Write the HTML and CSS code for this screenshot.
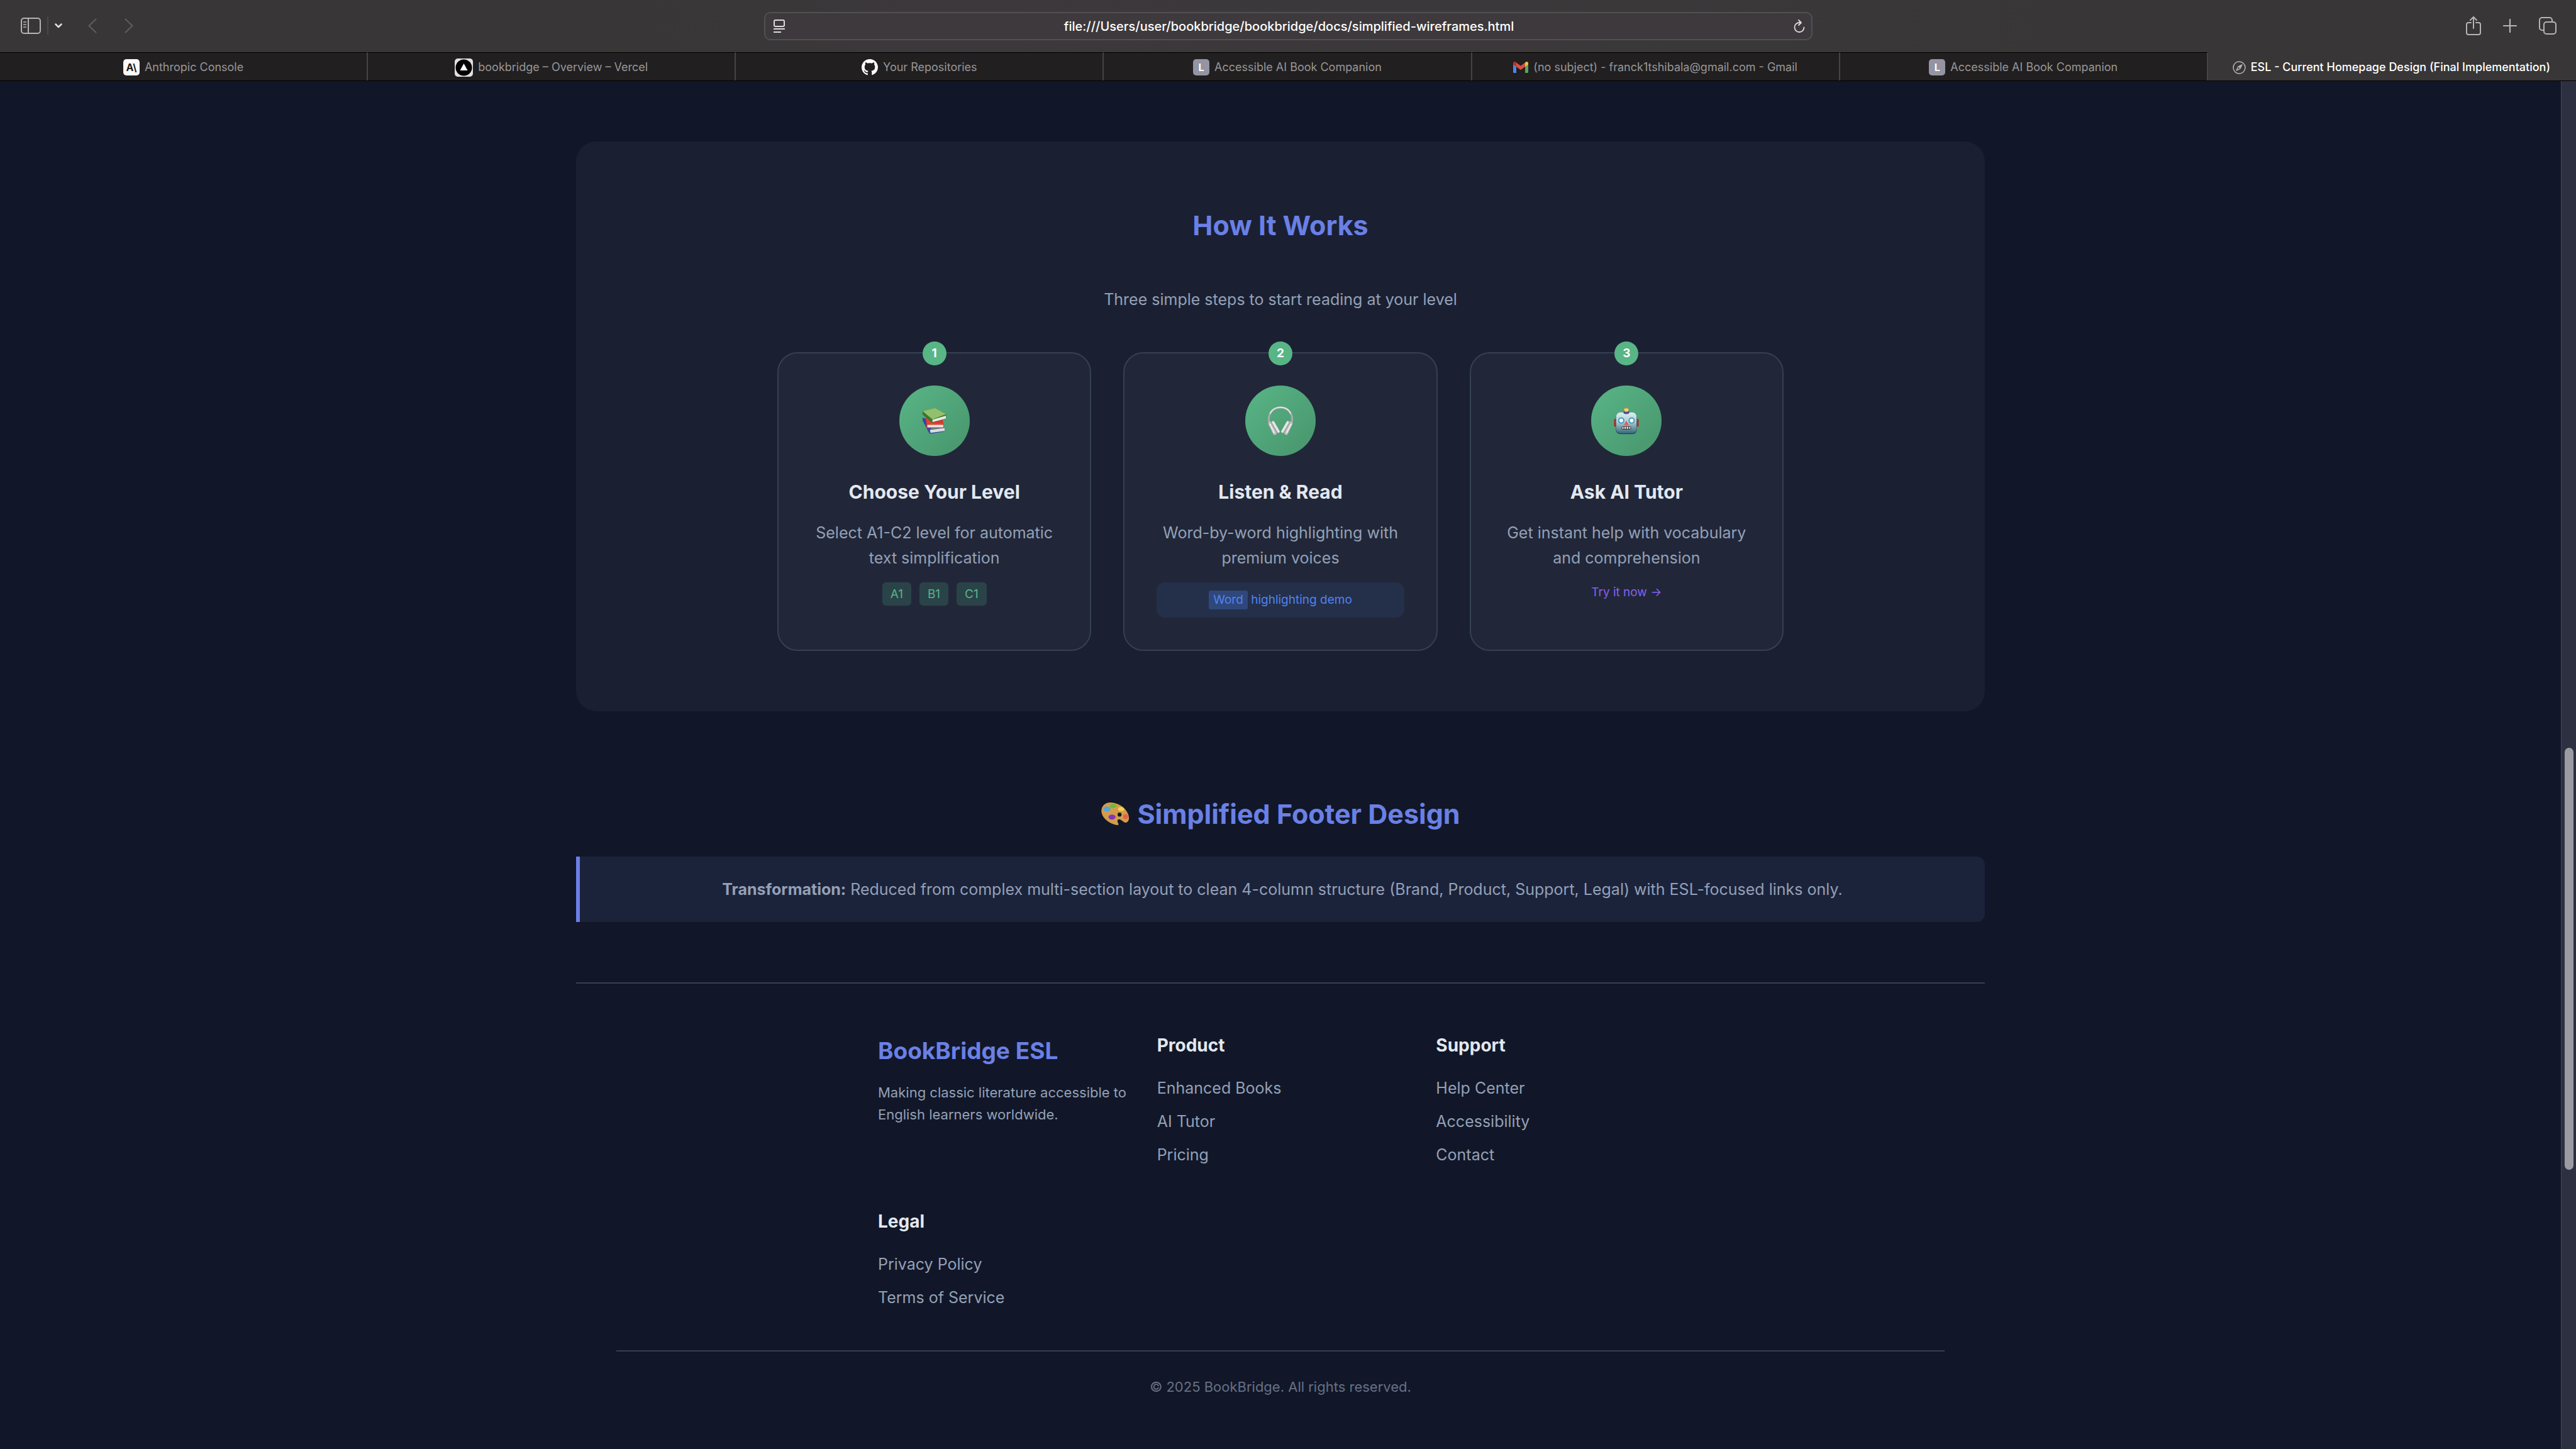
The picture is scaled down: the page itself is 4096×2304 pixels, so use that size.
FILE: index.html
```html
<!DOCTYPE html>
<html lang="en">
<head>
<meta charset="utf-8">
<title>ESL - Current Homepage Design (Final Implementation)</title>
<link rel="stylesheet" href="styles.css">
</head>
<body>
<header class="toolbar">
  <div class="tools tools-left">
    <button class="tool" aria-label="Sidebar"><svg width="32" height="26" viewBox="0 0 32 26" fill="none" stroke="#b5b3b4" stroke-width="2"><rect x="1" y="1" width="30" height="24" rx="4"/><path d="M12 1v24"/><path d="M4 7h5M4 11h5M4 15h5" stroke-width="1.5"/></svg></button>
    <span class="tool-divider"></span>
    <button class="tool tool-menu" aria-label="Tab groups"><svg width="12" height="8" viewBox="0 0 12 8" fill="none" stroke="#e2e0e1" stroke-width="2.5" stroke-linecap="round" stroke-linejoin="round"><path d="M1.500 1.500 6 6l4.500-4.500"/></svg></button>
    <button class="tool tool-back" aria-label="Back"><svg width="14" height="24" viewBox="0 0 14 24" fill="none" stroke="#5e5c5d" stroke-width="2.2" stroke-linecap="round" stroke-linejoin="round"><path d="M12.500 1.500 1.500 12l11 10.500"/></svg></button>
    <button class="tool tool-forward" aria-label="Forward"><svg width="14" height="24" viewBox="0 0 14 24" fill="none" stroke="#5e5c5d" stroke-width="2.2" stroke-linecap="round" stroke-linejoin="round"><path d="M1.500 1.500 12.500 12l-11 10.500"/></svg></button>
  </div>
  <div class="address">
    <svg width="18" height="21" viewBox="0 0 18 21" fill="none" stroke="#dddbdc" stroke-width="2"><rect x="1" y="1" width="16" height="10" rx="2"/><path d="M0 15h18M0 20h12"/></svg>
    <input class="address-input" type="text" aria-label="Address" value="file:///Users/user/bookbridge/bookbridge/docs/simplified-wireframes.html">
    <button class="tool" aria-label="Reload"><svg width="18" height="22" viewBox="0 0 18 22" fill="none" stroke="#dddbdc" stroke-width="1.8" stroke-linecap="round" stroke-linejoin="round"><path d="M16.500 12.500A7.500 7.500 0 1 1 9 5h2.500M8 1l4 4-4 4"/></svg></button>
  </div>
  <div class="tools tools-right">
    <button class="tool" aria-label="Share"><svg width="24" height="30" viewBox="0 0 24 30" fill="none" stroke="#b5b3b4" stroke-width="2" stroke-linecap="round" stroke-linejoin="round"><path d="M8 10H4a3 3 0 0 0-3 3v13a3 3 0 0 0 3 3h16a3 3 0 0 0 3-3V13a3 3 0 0 0-3-3h-4M12 19V1.500M7 6l5-5 5 5"/></svg></button>
    <button class="tool" aria-label="New tab"><svg width="22" height="22" viewBox="0 0 22 22" fill="none" stroke="#b5b3b4" stroke-width="2.200" stroke-linecap="round"><path d="M11 1v20M1 11h20"/></svg></button>
    <button class="tool" aria-label="Tab overview"><svg width="28" height="28" viewBox="0 0 28 28" fill="none" stroke="#b5b3b4" stroke-width="2" stroke-linecap="round"><rect x="8" y="8" width="19" height="19" rx="4"/><path d="M7 21H5a4 4 0 0 1-4-4V5a4 4 0 0 1 4-4h12a4 4 0 0 1 4 4v2"/></svg></button>
  </div>
</header>

<nav class="tabs">
  <a class="tab" href="#"><span class="favicon favicon-light">A\</span>Anthropic Console</a>
  <a class="tab" href="#"><svg width="29" height="29" viewBox="0 0 29 29"><rect width="29" height="29" rx="5" fill="#e2e0e1"/><circle cx="14.500" cy="14.500" r="13" fill="#000"/><path d="M14.500 8 20.500 19h-12z" fill="#fff"/></svg>bookbridge – Overview – Vercel</a>
  <a class="tab" href="#"><svg width="26" height="26" viewBox="0 0 16 16" fill="#fff"><path d="M8 0C3.580 0 0 3.580 0 8c0 3.540 2.290 6.530 5.470 7.590.4.070.550-.170.550-.380 0-.190-.010-.820-.010-1.490-2.010.370-2.530-.490-2.690-.940-.090-.230-.480-.940-.820-1.130-.280-.150-.680-.520-.010-.530.630-.010 1.080.580 1.230.820.720 1.210 1.870.870 2.330.660.070-.520.280-.870.510-1.070-1.780-.2-3.640-.890-3.640-3.950 0-.870.310-1.590.820-2.150-.080-.2-.360-1.020.080-2.120 0 0 .670-.210 2.200.820.640-.180 1.320-.270 2-.270s1.360.090 2 .270c1.530-1.040 2.200-.820 2.200-.820.440 1.100.160 1.920.080 2.120.510.560.820 1.270.820 2.150 0 3.070-1.870 3.750-3.650 3.950.290.250.540.730.540 1.480 0 1.070-.010 1.930-.010 2.200 0 .210.150.460.550.380A8.010 8.010 0 0 0 16 8c0-4.420-3.580-8-8-8z"/></svg>Your Repositories</a>
  <a class="tab" href="#"><span class="favicon favicon-letter">L</span>Accessible AI Book Companion</a>
  <a class="tab" href="#"><svg width="24" height="18" viewBox="0 0 24 18"><path d="M0 2v14.500A1.500 1.500 0 0 0 1.500 18H5V8z" fill="#4f86ec"/><path d="M24 2v14.500a1.500 1.500 0 0 1-1.500 1.500H19V8z" fill="#58a55c"/><path d="M19 1.500V8l5-3.500V2.500C24 .3 21.500-.6 19.800.7z" fill="#f2be42"/><path d="M0 2.500V4.500L5 8V1.500L4.200.7C2.500-.6 0 .3 0 2.500z" fill="#b4372a"/><path d="M5 8V1.500l7 5.200 7-5.200V8l-7 5.200z" fill="#d95040"/></svg>(no subject) - franck1tshibala@gmail.com - Gmail</a>
  <a class="tab" href="#"><span class="favicon favicon-letter">L</span>Accessible AI Book Companion</a>
  <a class="tab tab-active" href="#" aria-current="page"><svg width="21" height="21" viewBox="0 0 21 21" fill="none" stroke="#b5b3b4" stroke-width="1.500"><circle cx="10.500" cy="10.500" r="9.500"/><path d="M15 6 12 12 6 15 9 9z" stroke-linejoin="round"/><path d="M15 6 12 12 9 9z" fill="#b5b3b4" stroke="none"/></svg>ESL - Current Homepage Design (Final Implementation)</a>
</nav>

<div class="viewport">
  <main class="page">
    <section class="how">
      <h2 class="heading">How It Works</h2>
      <p class="how-lead">Three simple steps to start reading at your level</p>
      <div class="steps">
        <article class="step">
          <span class="step-number">1</span>
          <div class="step-icon"><svg width="42" height="44" viewBox="0 0 120 130">
            <path d="M4 50 22 56 44 104 108 98V101L106 116 40 126C36 126 34 122 32 118L4 64z" fill="#3346a8"/>
            <path d="M38 108 107 99V113L41 122z" fill="#dcdcdf"/>
            <path d="M19 50 98 60 103 82V99L26 100C21 98 21 92 22 84z" fill="#d8392b"/>
            <path d="M26 84H101V96H27z" fill="#e6e4e3"/><path d="M19 50 50 76H100V83H26z" fill="#e2452f"/>
            <path d="M4 20 62 5 115 34 113 56 50 74C46 74 44 70 40 68L4 36z" fill="#3c762a"/>
            <path d="M4 20 62 5 115 34 50 58z" fill="#92c06c"/>
            <path d="M51 60 113 41V55L52 71C49 68 49 63 51 60z" fill="#ebe9e8"/></svg></div>
          <h3 class="step-title">Choose Your Level</h3>
          <p class="step-text">Select A1-C2 level for automatic text simplification</p>
          <div class="chips"><span class="chip">A1</span><span class="chip">B1</span><span class="chip">C1</span></div>
        </article>
        <article class="step">
          <span class="step-number">2</span>
          <div class="step-icon"><svg width="42" height="48" viewBox="0 0 120 136" fill="none" stroke-linecap="round">
            <path d="M8 72C2 34 26 8 60 8S118 34 112 72" stroke="#a9a9aa" stroke-width="9"/>
            <path d="M14 34C24 14 40 7 60 7S96 14 106 34" stroke="#e3e1e2" stroke-width="6"/>
            <path d="M13 80 34 124M107 80 86 124" stroke="#bdbdbe" stroke-width="17"/>
            <path d="M12 84 32 122M108 84 88 122" stroke="#ececec" stroke-width="6"/>
            <path d="M25 76 49 118M95 76 71 118" stroke="#98999a" stroke-width="15"/>
            <path d="M27 75 51 117M93 75 69 117" stroke="#e6e6e6" stroke-width="11"/></svg></div>
          <h3 class="step-title">Listen &amp; Read</h3>
          <p class="step-text">Word-by-word highlighting with premium voices</p>
          <p class="demo"><mark class="demo-word">Word</mark> highlighting demo</p>
        </article>
        <article class="step">
          <span class="step-number">3</span>
          <div class="step-icon"><svg width="42" height="44" viewBox="0 0 124 130">
            <defs><linearGradient id="metal" x1="0" y1="0" x2="0" y2="1"><stop offset="0" stop-color="#d9efef"/><stop offset=".45" stop-color="#b3ccd0"/><stop offset="1" stop-color="#34697f"/></linearGradient>
            <linearGradient id="bulb" x1="0" y1="0" x2="0" y2="1"><stop offset="0" stop-color="#f08a1c"/><stop offset=".5" stop-color="#ffe28a"/><stop offset="1" stop-color="#f09a20"/></linearGradient></defs>
            <rect x="4" y="57" width="12" height="36" rx="4" fill="#a8322e"/><rect x="108" y="57" width="12" height="36" rx="4" fill="#a8322e"/>
            <rect x="13" y="27" width="98" height="101" rx="20" fill="#1f4457"/>
            <rect x="14" y="26" width="96" height="98" rx="19" fill="url(#metal)"/>
            <ellipse cx="62" cy="26" rx="14" ry="8" fill="#5b4a85"/><circle cx="62" cy="14" r="10" fill="url(#bulb)"/>
            <circle cx="38" cy="64" r="15" fill="#3f9cc4"/><circle cx="87" cy="64" r="15" fill="#3f9cc4"/>
            <circle cx="38" cy="64" r="9" fill="#f4fdff"/><circle cx="87" cy="64" r="9" fill="#f4fdff"/>
            <path d="M62 64 73 85H51z" fill="#d95f5c"/>
            <rect x="39" y="91" width="46" height="15" rx="7" fill="#3d3a3c"/><path d="M43 94h6v9h-6zM53 94h7v9h-7zM64 94h7v9h-7zM75 94h6v9h-6z" fill="#f5f2ec"/></svg></div>
          <h3 class="step-title">Ask AI Tutor</h3>
          <p class="step-text">Get instant help with vocabulary and comprehension</p>
          <a class="try" href="#">Try it now →</a>
        </article>
      </div>
    </section>

    <h2 class="heading heading-footer"><svg width="46" height="36" viewBox="0 0 56 45" aria-hidden="true">
      <path d="M18 0C8 0 0 8 1 18 2 31 17 43 34 45 37 43 30 37 34 34 39 31 43 39 49 40 56 39 57 30 54 23 48 9 33 0 18 0zM37 20A4 4 0 1 1 37 28 4 4 0 0 1 37 20z" fill="#d39c4b" fill-rule="evenodd"/>
      <ellipse cx="12" cy="13" rx="7" ry="5" fill="#4fa9dc"/><ellipse cx="24" cy="7" rx="6" ry="4" fill="#63bd3c"/><ellipse cx="40" cy="13" rx="6" ry="4" fill="#f3d24a"/><ellipse cx="49" cy="28" rx="5" ry="5" fill="#e8604c"/><ellipse cx="22" cy="29" rx="7" ry="5" fill="#8236b5"/></svg>Simplified Footer Design</h2>
    <p class="note"><strong>Transformation:</strong> Reduced from complex multi-section layout to clean 4-column structure (Brand, Product, Support, Legal) with ESL-focused links only.</p>

    <footer class="footer">
      <div class="footer-grid">
        <div>
          <h3 class="brand">BookBridge ESL</h3>
          <p class="tagline">Making classic literature accessible to<br>English learners worldwide.</p>
        </div>
        <div>
          <h4 class="footer-title">Product</h4>
          <ul class="links"><li><a href="#">Enhanced Books</a></li><li><a href="#">AI Tutor</a></li><li><a href="#">Pricing</a></li></ul>
        </div>
        <div>
          <h4 class="footer-title">Support</h4>
          <ul class="links"><li><a href="#">Help Center</a></li><li><a href="#">Accessibility</a></li><li><a href="#">Contact</a></li></ul>
        </div>
        <div>
          <h4 class="footer-title">Legal</h4>
          <ul class="links"><li><a href="#">Privacy Policy</a></li><li><a href="#">Terms of Service</a></li></ul>
        </div>
      </div>
      <p class="copyright">© 2025 BookBridge. All rights reserved.</p>
    </footer>
  </main>
  <div class="scrollbar"><span class="scrollbar-thumb"></span></div>
</div>
</body>
</html>
```

FILE: styles.css
```css
* { box-sizing: border-box; margin: 0; padding: 0; }

body {
  display: flex;
  flex-direction: column;
  min-height: 100vh;
  background: #111728;
  color: #94a0b6;
  font-family: Inter, "Liberation Sans", sans-serif;
  font-size: 25px;
  line-height: 40px;
}

a { color: inherit; text-decoration: none; }
svg { display: block; flex: none; }
button, input { font: inherit; color: inherit; background: none; border: 0; }

/* Browser toolbar */
.toolbar {
  display: grid;
  grid-template-columns: 1fr 1667px 1fr;
  align-items: center;
  height: 83px;
  background: linear-gradient(90deg, #383636 25%, #3c383b 35%, #3b383a 65%, #383636 80%);
}
.tools { display: flex; align-items: center; padding-bottom: 2px; }
.tools-left { padding-left: 33px; }
.tools-right { justify-content: flex-end; gap: 35px; padding-right: 31px; }
.tool { display: flex; align-items: center; }
.tool-divider { width: 2px; height: 29px; margin-left: 10px; background: #4a4849; }
.tool-menu { margin-left: 10px; }
.tool-back { margin-left: 41px; }
.tool-forward { margin-left: 44px; }

.address {
  display: flex;
  align-items: center;
  height: 45px;
  padding: 0 10px 0 13px;
  border: 2px solid #535054;
  border-radius: 10px;
  background: #3d393c;
}
.address-input {
  flex: 1;
  min-width: 0;
  color: #fff;
  font-size: 20px;
  font-weight: 500;
  line-height: 30px;
  text-align: center;
}

/* Tab strip */
.tabs {
  display: grid;
  grid-template-columns: repeat(7, 1fr);
  height: 46px;
  border-bottom: 1px solid #000;
}
.tab {
  display: flex;
  align-items: center;
  justify-content: center;
  gap: 8px;
  padding-top: 2px;
  border-top: 1px solid #000;
  border-right: 2px solid #454344;
  background: #211f20;
  color: #989697;
  font-size: 18px;
  line-height: 24px;
  white-space: nowrap;
}
.tab-active {
  border-color: #383636;
  background: #383636;
  color: #fff;
  font-weight: 500;
}
.favicon {
  display: flex;
  align-items: center;
  justify-content: center;
  width: 26px;
  height: 26px;
  border-radius: 5px;
  font-size: 16px;
  font-weight: 700;
}
.favicon-light { background: #fbfaf8; color: #1b1a1a; }
.favicon-letter { background: #9494a3; color: #fff; }

/* Page */
.viewport { display: flex; flex: 1; }
.page { flex: 1; padding: 96px 64px 0; }
.page > * { max-width: 2240px; margin-left: auto; margin-right: auto; }

.heading {
  color: #6a80e6;
  font-size: 43px;
  font-weight: 700;
  line-height: 74px;
  text-align: center;
}

.how {
  padding: 96px;
  border-radius: 32px;
  background: #1a2032;
  text-align: center;
}
.how-lead { margin: 61px 0 64px; }

.steps {
  display: grid;
  grid-template-columns: repeat(3, 1fr);
  gap: 51px;
  max-width: 1600px;
  margin: 0 auto;
}
.step {
  position: relative;
  padding: 51px;
  border: 2px solid #354052;
  border-radius: 32px;
  background: #212739;
}
.step-number {
  position: absolute;
  top: -19px;
  left: 50%;
  width: 38px;
  height: 38px;
  margin-left: -19px;
  border-radius: 50%;
  background: #58b586;
  color: #fff;
  font-size: 19px;
  font-weight: 700;
  line-height: 38px;
}
.step-icon {
  display: flex;
  align-items: center;
  justify-content: center;
  width: 112px;
  height: 112px;
  margin: 0 auto 37px;
  border-radius: 50%;
  background: linear-gradient(135deg, #58b586, #48946c);
}
.step-title {
  color: #e3e8f0;
  font-size: 30px;
  font-weight: 700;
  margin-bottom: 25px;
}
.step-text { margin-bottom: 19px; }

.chips { display: flex; justify-content: center; gap: 13px; }
.chip {
  padding: 0 13px;
  border-radius: 6px;
  background: #2a4349;
  color: #58b586;
  font-size: 19px;
  line-height: 37px;
}
.demo {
  padding: 13px;
  border-radius: 13px;
  background: #242f4a;
  color: #5083ee;
  font-size: 19px;
  line-height: 30px;
}
.demo-word {
  display: inline-block;
  padding: 0 7px;
  border-radius: 3px;
  background: #30477c;
  color: inherit;
}
.try { display: block; color: #8560f0; font-size: 19px; line-height: 32px; }

.heading-footer {
  display: flex;
  align-items: center;
  justify-content: center;
  gap: 12px;
  padding-top: 126px;
  margin-bottom: 31px;
}
.note {
  padding: 32px;
  border-left: 6px solid #6a80e6;
  border-radius: 0 13px 13px 0;
  background: #1b233b;
  text-align: center;
}

/* Footer */
.footer {
  margin-top: 96px;
  padding: 76px 64px 0;
  border-top: 2px solid #354052;
}
.footer-grid {
  display: grid;
  grid-template-columns: repeat(3, minmax(0, 1fr));
  gap: 51px;
  max-width: 1280px;
  margin: 0 auto 51px;
}
.brand { color: #6a80e6; font-size: 37px; font-weight: 700; line-height: 61px; margin-bottom: 19px; }
.tagline { font-size: 22px; line-height: 35px; white-space: nowrap; }
.footer-title { color: #e3e8f0; font-size: 28px; font-weight: 700; line-height: 44px; margin-bottom: 26px; }
.links { list-style: none; }
.links li { margin-bottom: 13px; }
.copyright {
  padding-top: 38px;
  border-top: 2px solid #354052;
  color: #667086;
  font-size: 22px;
  line-height: 36px;
  text-align: center;
}

/* Scrollbar */
.scrollbar {
  display: grid;
  grid-template-rows: 1060fr 671fr 444fr;
  justify-items: center;
  width: 24px;
  border-left: 1px solid #454757;
  background: #2d3040;
}
.scrollbar-thumb { grid-row: 2; width: 14px; border-radius: 7px; background: #9b9ba4; }
```
